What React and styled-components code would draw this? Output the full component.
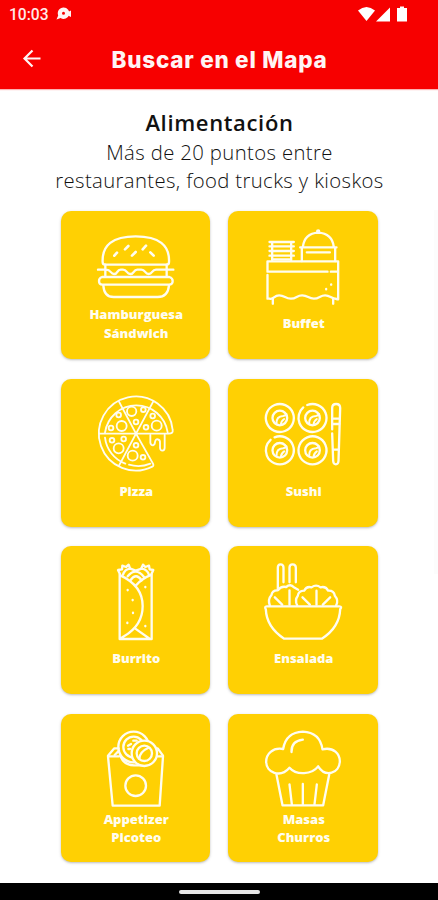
import React from "react";
import styled, { createGlobalStyle } from "styled-components";

const HamburgerIcon = () => (
  <IconSvg viewBox="141 68 234 234">
    <path d="M158 171 Q154 93 257 93 Q361 93 357 171 Q357 178 350 178 H165 Q158 178 158 171 Z" />
    <path d="M193 151 L201 142 M225 132 L235 122 M246 151 L257 140 M278 132 L288 121 M311 151 L301 141" strokeWidth="8" />
    <path d="M166 178 V211 M350 178 V211 M144 193 H168 C184 193 181 206 192 206 C205 206 199 193 212 193 H219 C232 193 229 206 241 206 C254 206 249 193 262 193 H274 C287 193 284 206 296 206 C308 206 305 193 318 193 H370" />
    <path d="M156 215 Q147 218 147 227 Q147 238 157 238 H357 Q368 238 368 227 Q368 218 358 215 Z" />
    <path d="M160 240 Q162 275 191 275 H323 Q354 275 357 240" />
  </IconSvg>
);

const BuffetIcon = () => (
  <IconSvg viewBox="132.5 68 234 234">
    <path d="M149 110 H222 M149 123 H222 M149 137 H222 M149 151 H222 M157 111 V165 M214 111 V165 M157 162 H214" />
    <path d="M241 126 H350 M249 125 Q254 84 295 82 Q337 84 342 125 M246 128 V167 M346 128 V167 M261 141 H330" />
    <circle cx="295" cy="78" r="3" />
    <path d="M143 168 H355 V282 H351 M143 168 V199 H323 M333 199 H355 M143 209 V280 H149 C163 284 161 270 178 270 C195 270 196 280 213 280 C231 280 230 270 247 270 C265 270 265 280 282 280 C299 280 300 270 316 270 C332 270 333 281 351 281" />
    <path d="M159 279 V295 M340 280 V295" />
    <path d="M319 251 V252 M334 237 V238" />
  </IconSvg>
);

const PizzaIcon = () => (
  <IconSvg viewBox="141 75 234 234" $thin>
    <path d="M258 191 H356 Q370 191 368 180 A111 111 0 1 0 307 290 Q312 288 309 281 Z" />
    <path d="M353 187 A95 95 0 0 0 165 188 M165 203 A95 95 0 0 0 226 281 M237 284 A95 95 0 0 0 301 281" />
    <path d="M147 191 H258 L207 95 M258 191 L310 94 M258 191 L207 287" />
    <circle cx="245" cy="124" r="14" />
    <circle cx="215" cy="168" r="15" />
    <circle cx="320" cy="167" r="15" />
    <circle cx="206" cy="235" r="15" />
    <circle cx="248" cy="257" r="15" />
    <circle cx="206" cy="135" r="7" />
    <circle cx="280" cy="119" r="7" />
    <circle cx="308" cy="138" r="7" />
    <circle cx="258" cy="156" r="7" />
    <circle cx="183" cy="174" r="7" />
    <circle cx="288" cy="172" r="7" />
    <circle cx="186" cy="211" r="7" />
    <circle cx="221" cy="207" r="7" />
    <circle cx="258" cy="226" r="7" />
    <circle cx="279" cy="262" r="7" />
    <path d="M301 195 V218 Q302 226 309 226 Q315 224 315 216 Q317 206 324 208 Q331 210 330 219 V234 Q331 242 337 242 Q344 241 344 233 V194" />
  </IconSvg>
);

const SushiRoll = ({ x, y, gap }) => (
  <g transform={`translate(${x} ${y})`}>
    <circle r="42" strokeDasharray={gap ? "248 16" : undefined} transform="rotate(-112)" />
    <circle r="22" />
    <path d="M-10 17 Q-11 -5 10 -6 Q17 -7 20 -12 M3 20 Q4 9 13 3" strokeWidth="6" />
  </g>
);

const SushiIcon = () => (
  <IconSvg viewBox="132.5 75 234 234">
    <SushiRoll x={180} y={144} />
    <SushiRoll x={278} y={144} gap />
    <SushiRoll x={180} y={241} gap />
    <SushiRoll x={278} y={241} />
    <path d="M337 178 V114 Q337 102 349 102 Q361 102 361 114 L356 273 Q355 283 348 283 Q341 283 340 273 L337 190 M337 146 H360 M337 162 H360 M340 239 H356" />
  </IconSvg>
);

const BurritoIcon = () => (
  <IconSvg viewBox="141 68 234 234">
    <path d="M209 103 V296 H305 V103 M211 105 Q278 136 278 197 Q278 255 222 288 L209 296 M305 103 Q275 115 257 136 M256 265 L300 296" />
    <path d="M210 102 L204 89 L216 87 L217 76 L228 80 L236 73 L240 84 M304 102 L310 89 L299 87 L297 76 L286 80 L279 73 L274 84" />
    <path d="M219 103 Q224 87 241 85 L257 91 L275 85 Q292 87 297 104 M233 108 Q257 79 282 110 M242 119 Q258 96 275 120" />
    <path d="M233 149 V150 M248 179 V180 M249 217 V218 M232 247 V248 M286 140 V141 M286 257 V258" />
  </IconSvg>
);

const SaladIcon = () => (
  <IconSvg viewBox="132.5 68 234 234">
    <path d="M141 198 H358 Q368 198 361 207 Q359 261 306 295 H193 Q140 260 138 207 Q133 198 141 198 Z" />
    <path d="M174 148 V82 Q174 72 182 72 Q191 72 191 82 V126 M209 126 V82 Q209 72 218 72 Q228 72 228 82 V126" />
    <path d="M150 195 Q143 177 155 164 Q157 149 174 150 Q184 136 199 140 Q212 129 222 141 L235 148" />
    <path d="M232 195 Q224 179 234 166 Q236 151 253 151 Q260 137 275 141 Q289 131 302 141 Q318 137 325 151 Q342 150 345 166 Q357 180 349 195" />
    <path d="M165 171 L187 193 M209 150 V193 M248 171 L270 193 M290 151 V193 M331 171 L309 193" />
  </IconSvg>
);

const AppetizerIcon = () => (
  <IconSvg viewBox="141 75 234 234">
    <path d="M207 154 H174 L188 302 H329 L339 154 H312" />
    <path d="M174 152 L193 130 H206 M339 152 L323 130 H318 M194 150 L207 137" />
    <circle cx="257" cy="242" r="31" />
    <circle cx="251" cy="126" r="46" />
    <circle cx="251" cy="126" r="31" />
    <path d="M234 122 L243 117 M235 132 H240 M250 107 H260" />
    <path d="M211 151 Q220 180 252 181 H279" />
    <circle cx="283" cy="145" r="38" fill="#ffd003" />
    <circle cx="283" cy="145" r="23" />
    <path d="M268 162 Q268 141 294 129" />
  </IconSvg>
);

const CupcakeIcon = () => (
  <IconSvg viewBox="132.5 75 234 234">
    <path d="M190 132 Q198 82 249 80 Q300 82 308 133 C342 125 360 148 360 169 C359 205 317 219 295 184 C276 209 230 212 209 188 C181 220 139 203 139 170 C139 148 158 126 190 132 Z" />
    <path d="M215 141 Q214 108 249 104" />
    <path d="M170 209 L188 301 H310 L328 209 M209 238 L216 298 M249 237 V298 M291 238 L284 298" />
  </IconSvg>
);

const categories = [
  { id: 1, lines: ["Hamburguesa", "Sándwich"], Icon: HamburgerIcon },
  { id: 2, lines: ["Buffet"], Icon: BuffetIcon },
  { id: 3, lines: ["Pizza"], Icon: PizzaIcon },
  { id: 4, lines: ["Sushi"], Icon: SushiIcon },
  { id: 5, lines: ["Burrito"], Icon: BurritoIcon },
  { id: 6, lines: ["Ensalada"], Icon: SaladIcon },
  { id: 7, lines: ["Appetizer", "Picoteo"], Icon: AppetizerIcon, low: true },
  { id: 8, lines: ["Masas", "Churros"], Icon: CupcakeIcon, low: true },
];

const App = () => {
  return (
    <Screen>
      <GlobalStyle />
      <Header>
        <StatusBar>
          <Clock>10:03</Clock>
          <svg width="16" height="14" viewBox="0 0 16 14" fill="#fff4f4">
            <path fillRule="evenodd" d="M7.5 0.5 A5.7 5.7 0 1 1 4.6 11 L0.5 12.5 L2.2 8.4 A5.7 5.7 0 0 1 7.5 0.5 Z M7.5 4.8 A1.5 1.5 0 1 0 7.5 7.8 A1.5 1.5 0 1 0 7.5 4.8 Z" />
            <path d="M12 5 L15 3.5 V10 L12 8.5 Z" />
          </svg>
          <Signals>
            <svg width="52" height="17" viewBox="0 0 52 17" fill="white">
              <path d="M1 4.5 Q9.5 -2.5 18 4.5 L9.5 15 Z" />
              <path d="M19 15.5 L33 1.5 V15.5 Z" />
              <path d="M40 2 H43 V0.5 H47 V2 H50 V15.5 H40 Z" />
            </svg>
          </Signals>
        </StatusBar>
        <TitleBar>
          <BackBtn aria-label="Volver">
            <svg width="20" height="20" viewBox="0 0 20 20" fill="none" stroke="#fff4f4" strokeWidth="2.2">
              <path d="M18.5 9.5 H2.5 M10.5 1.5 L2.5 9.5 L10.5 17.5" />
            </svg>
          </BackBtn>
          <Title>Buscar en el Mapa</Title>
        </TitleBar>
      </Header>

      <Content>
        <Heading>Alimentación</Heading>
        <Text>Más de 20 puntos entre</Text>
        <Text>restaurantes, food trucks y kioskos</Text>
        <CategoryGrid>
          {categories.map(({ id, lines, Icon, low }) => (
            <Card key={id}>
              <Icon />
              <Label $low={low}>
                {lines.map((line) => (
                  <span key={line}>{line}</span>
                ))}
              </Label>
            </Card>
          ))}
        </CategoryGrid>
        <ScrollThumb />
      </Content>

      <NavBar>
        <HomePill />
      </NavBar>
    </Screen>
  );
};

const GlobalStyle = createGlobalStyle`
  * {
    box-sizing: border-box;
  }
  body {
    margin: 0;
    background-color: white;
  }
`;

const Screen = styled.div`
  display: flex;
  flex-direction: column;
  width: 438px;
  height: 900px;
  overflow: hidden;
  background-color: white;
  font-family: "Open Sans", "Noto Sans", sans-serif;
`;

const Header = styled.header`
  height: 89px;
  flex-shrink: 0;
  background-color: #f70000;
  box-shadow: 0 1px 1px rgba(248, 0, 0, 0.3);
`;

const StatusBar = styled.div`
  display: flex;
  align-items: center;
  height: 28px;
  padding: 0 29px 0 9px;
  gap: 7px;
`;

const Clock = styled.span`
  color: #ffe9e9;
  font-family: Roboto, sans-serif;
  font-size: 15.6px;
  font-weight: 500;
  line-height: 28px;
  padding-top: 2px;
`;

const Signals = styled.div`
  display: flex;
  margin-left: auto;
`;

const TitleBar = styled.div`
  display: grid;
  grid-template-columns: 64px 1fr 64px;
  align-items: center;
  height: 61px;
`;

const BackBtn = styled.button`
  display: flex;
  width: 20px;
  height: 20px;
  margin: 0 0 0 22px;
  padding: 0;
  border: none;
  background: none;
`;

const Title = styled.h1`
  margin: 2px 0 0 1px;
  color: #fff4f4;
  font-family: Inter, sans-serif;
  font-size: 22.5px;
  font-weight: 800;
  line-height: 30px;
  letter-spacing: 0.75px;
  text-align: center;
  white-space: nowrap;
`;

const Content = styled.main`
  position: relative;
  flex: 1;
  padding-top: 19px;
  text-align: center;
`;

const Heading = styled.h2`
  margin: 0;
  padding-left: 1px;
  color: #111;
  font-size: 22px;
  font-weight: 600;
  line-height: 29px;
  letter-spacing: 0.65px;
`;

const Text = styled.p`
  margin: 0;
  padding-left: 1px;
  color: #111;
  font-size: 20.3px;
  font-weight: 300;
  line-height: 28px;
  letter-spacing: 0.38px;
  white-space: nowrap;

  &:first-of-type {
    margin-top: 1px;
  }
`;

const CategoryGrid = styled.section`
  display: grid;
  grid-template-columns: 149.5px 149.5px;
  grid-auto-rows: 148px;
  gap: 19.5px 18px;
  margin: 17px 0 0 60.5px;
`;

const Card = styled.div`
  display: flex;
  flex-direction: column;
  align-items: center;
  padding-top: 16.5px;
  border-radius: 10px;
  background-color: #ffd003;
  box-shadow: 0 1px 2.5px rgba(60, 60, 60, 0.35);
`;

const IconSvg = styled.svg`
  width: 78px;
  height: 78px;
  margin-left: 1px;
  overflow: visible;
  fill: none;
  stroke: #fffdf0;
  stroke-width: ${(props) => (props.$thin ? 5.5 : 7)};
  stroke-linecap: round;
  stroke-linejoin: round;
`;

const Label = styled.div`
  display: flex;
  flex-direction: column;
  justify-content: center;
  height: 37px;
  margin-top: ${(props) => (props.$low ? "1.5px" : "-0.5px")};
  padding-left: 2px;
  color: #fffdf0;
  font-size: 13px;
  font-weight: 800;
  line-height: 18.5px;
`;

const ScrollThumb = styled.div`
  position: absolute;
  top: 121px;
  right: 0;
  width: 4px;
  height: 364px;
  background-color: #fcfcfc;
`;

const NavBar = styled.footer`
  display: flex;
  justify-content: center;
  height: 17.5px;
  flex-shrink: 0;
  padding-top: 7.5px;
  background-color: black;
`;

const HomePill = styled.div`
  width: 81px;
  height: 4px;
  border-radius: 2px;
  background-color: #e6e6e6;
`;

export default App;
